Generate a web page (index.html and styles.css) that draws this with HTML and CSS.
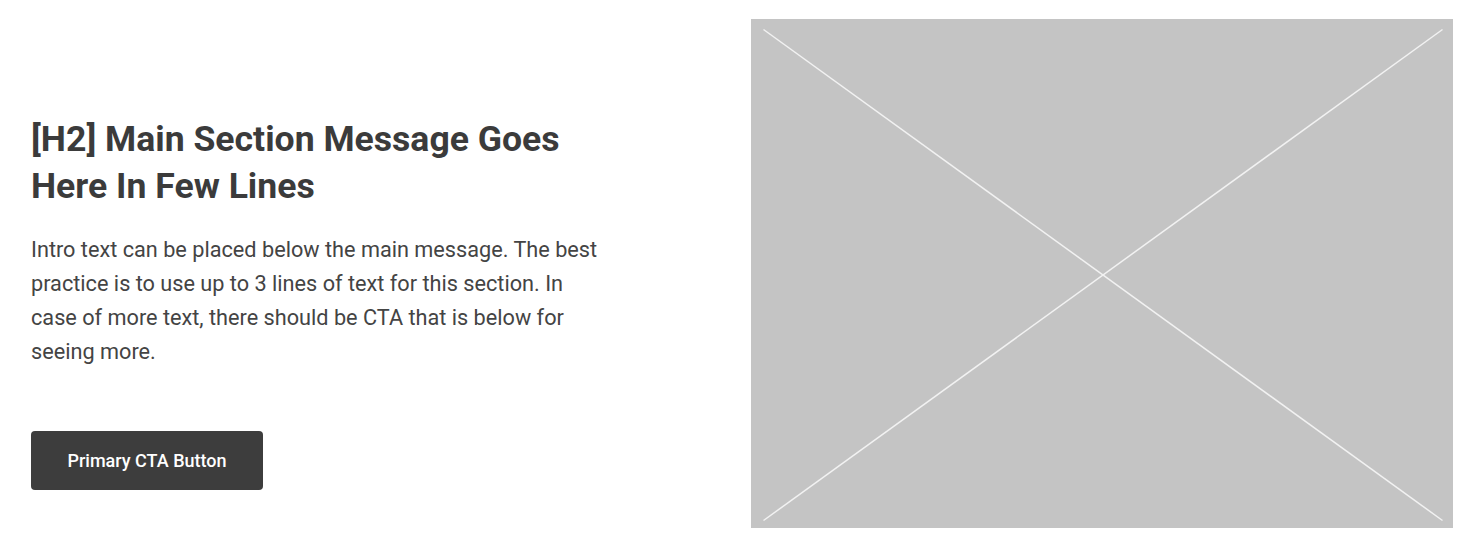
FILE: index.html
```html
<!DOCTYPE html>
<html>
<head>
<meta charset="utf-8">
<link rel="stylesheet" href="styles.css">
</head>
<body>
<section class="hero">
  <div class="copy">
    <h2 class="title">[H2] Main Section Message Goes Here In Few Lines</h2>
    <p class="intro">Intro text can be placed below the main message. The best practice is to use up to 3 lines of text for this section. In case of more text, there should be CTA that is below for seeing more.</p>
    <a class="cta" href="#">Primary CTA Button</a>
  </div>
  <div class="media">
    <svg class="cross" viewBox="0 0 702 509" preserveAspectRatio="none">
      <line x1="12.5" y1="10.5" x2="691.5" y2="501.5" stroke="#f2f2f2" stroke-width="1.5"/>
      <line x1="691.5" y1="10.5" x2="12.5" y2="501.5" stroke="#f2f2f2" stroke-width="1.5"/>
    </svg>
  </div>
</section>
</body>
</html>
```
FILE: styles.css
```css
html, body {
  margin: 0;
  padding: 0;
  background: #ffffff;
}
body {
  font-family: Roboto, "Liberation Sans", sans-serif;
  color: #3d3d3d;
}
.hero {
  display: flex;
  justify-content: space-between;
  padding: 19px 8px 19px 31px;
}
.copy {
  width: 576px;
  padding-top: 97px;
}
.title {
  margin: 0;
  font-size: 35.6px;
  font-weight: 700;
  line-height: 47px;
  color: #3b3b3b;
}
.intro {
  margin: 23px 0 0;
  font-size: 21.7px;
  line-height: 34px;
  color: #444444;
}
.cta {
  display: inline-flex;
  align-items: center;
  justify-content: center;
  margin-top: 62px;
  width: 232px;
  height: 59px;
  border-radius: 4px;
  background: #3d3d3d;
  color: #ffffff;
  font-size: 18px;
  font-weight: 500;
  text-decoration: none;
}
.media {
  width: 702px;
  height: 509px;
  background: #c4c4c4;
  flex: none;
}
.cross {
  display: block;
  width: 100%;
  height: 100%;
}
```
